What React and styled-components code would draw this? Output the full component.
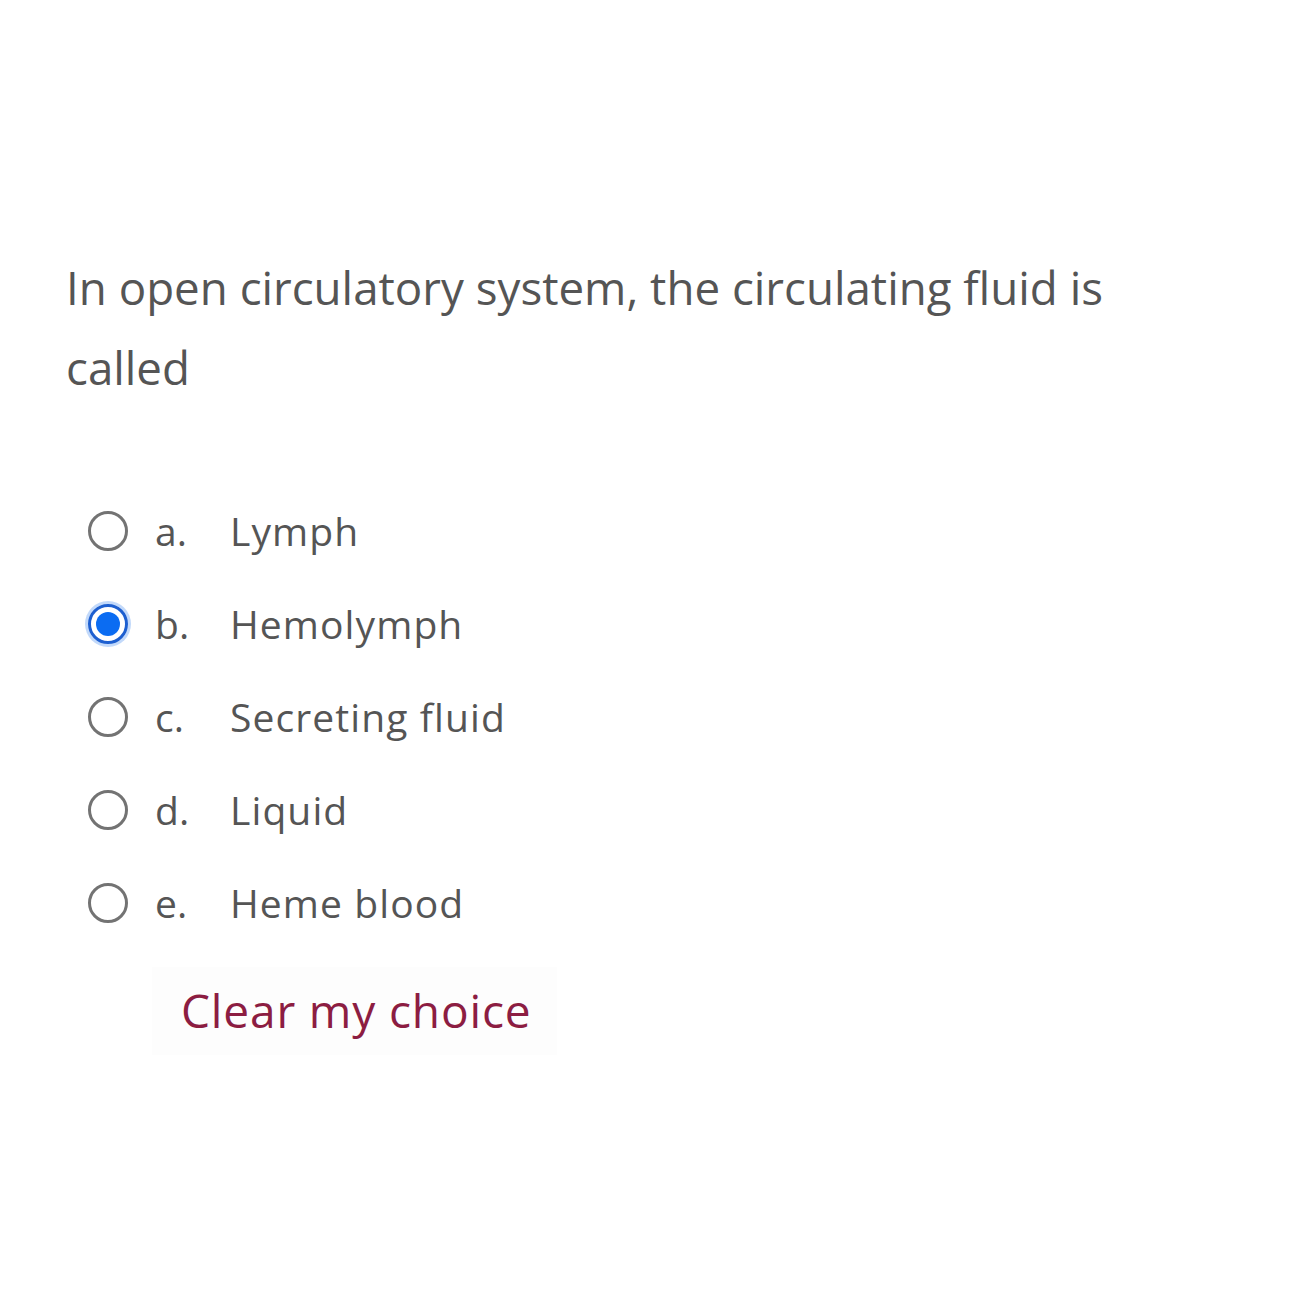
import React, { useState } from 'react';
import styled, { createGlobalStyle } from 'styled-components';

const GlobalStyle = createGlobalStyle`
  body {
    margin: 0;
    background: #ffffff;
    font-family: "Open Sans", "Noto Sans", sans-serif;
  }
`;

const Page = styled.div`
  width: 1290px;
  height: 1290px;
  box-sizing: border-box;
  padding: 247px 0 0 66px;
`;

const Question = styled.div`
  width: 1100px;
  font-size: 45.7px;
  line-height: 80px;
  color: #555555;
`;

const Answers = styled.div`
  margin-top: 77px;
  display: flex;
  flex-direction: column;
`;

const Row = styled.label`
  display: flex;
  align-items: center;
  height: 93px;
  padding-left: 22px;
  cursor: pointer;
`;

const Radio = styled.span`
  width: 40px;
  height: 40px;
  box-sizing: border-box;
  border-radius: 50%;
  flex-shrink: 0;
  border: ${p => (p.$checked ? '3px solid #1d5fd0' : '3px solid #737373')};
  box-shadow: ${p => (p.$checked ? '0 0 0 3px rgba(120, 170, 245, 0.45)' : 'none')};
  display: flex;
  align-items: center;
  justify-content: center;

  &::after {
    content: '';
    display: ${p => (p.$checked ? 'block' : 'none')};
    width: 24px;
    height: 24px;
    border-radius: 50%;
    background: #0b6cf2;
  }
`;

const Letter = styled.span`
  width: 75px;
  margin-left: 27px;
  font-size: 39px;
  color: #555555;
`;

const AnswerText = styled.span`
  font-size: 39px;
  color: #555555;
  letter-spacing: 1.1px;
`;

const ClearButton = styled.button`
  margin: 18px 0 0 86px;
  align-self: flex-start;
  background: #fdfdfd;
  border: none;
  padding: 12px 26px 14px 29px;
  font-family: "Open Sans", "Noto Sans", sans-serif;
  font-size: 46px;
  color: #8c1d42;
  letter-spacing: 0.85px;
  cursor: pointer;
`;

const options = [
  { key: 'a', text: 'Lymph' },
  { key: 'b', text: 'Hemolymph' },
  { key: 'c', text: 'Secreting fluid' },
  { key: 'd', text: 'Liquid' },
  { key: 'e', text: 'Heme blood' },
];

const App = () => {
  const [choice, setChoice] = useState('b');

  return (
    <Page>
      <GlobalStyle />
      <Question>In open circulatory system, the circulating fluid is called</Question>
      <Answers>
        {options.map(o => (
          <Row key={o.key} onClick={() => setChoice(o.key)}>
            <Radio $checked={choice === o.key} />
            <Letter>{o.key}.</Letter>
            <AnswerText>{o.text}</AnswerText>
          </Row>
        ))}
        <ClearButton onClick={() => setChoice(null)}>Clear my choice</ClearButton>
      </Answers>
    </Page>
  );
};

export default App;
